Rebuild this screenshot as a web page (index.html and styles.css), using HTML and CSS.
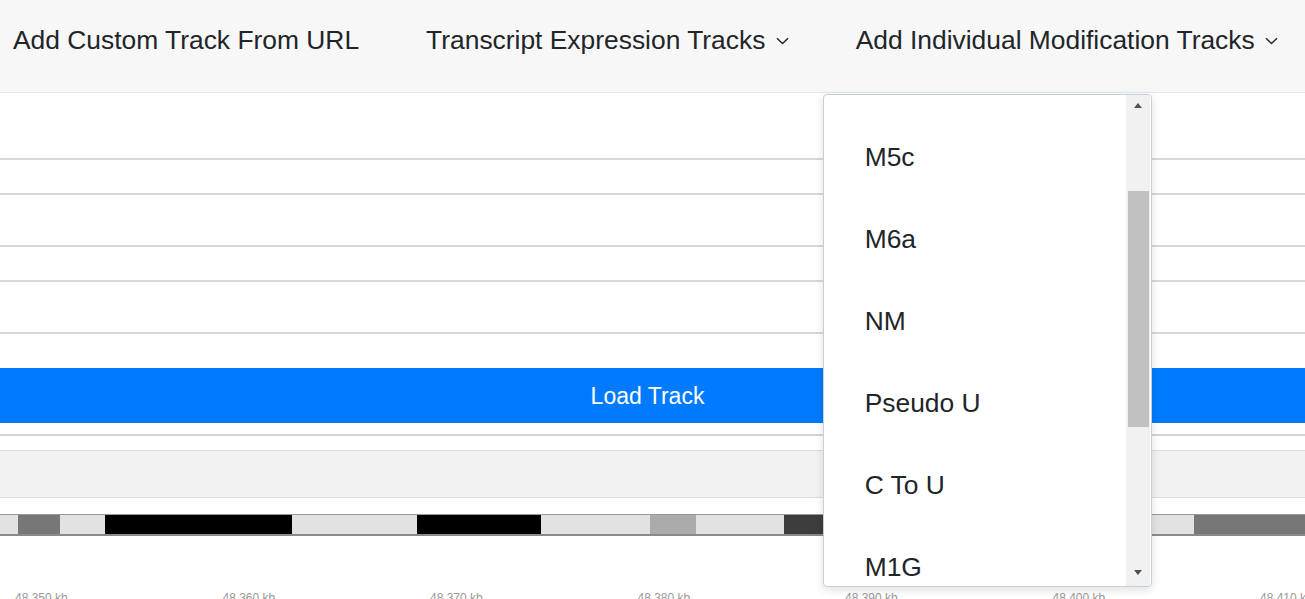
FILE: index.html
```html
<!DOCTYPE html>
<html lang="en">
<head>
    <meta charset="UTF-8">
    <meta name="viewport" content="width=device-width, initial-scale=1.0">
    <title>Genome Browser - Tracks</title>
    <link rel="stylesheet" href="styles.css">
</head>
<body>
    <!-- Top menu with the track options -->
    <header class="navbar">
        <a class="nav-link" href="#">Add Custom Track From URL</a>
        <div class="nav-dropdown">
            <a class="nav-link" href="#">Transcript Expression Tracks
                <svg class="caret" width="13" height="8" viewBox="0 0 13 8"><path d="M1 1.2l5.5 5.3 5.5-5.3" fill="none" stroke="#212529" stroke-width="1.4"/></svg>
            </a>
        </div>
        <div class="nav-dropdown">
            <a class="nav-link" href="#">Add Individual Modification Tracks
                <svg class="caret" width="13" height="8" viewBox="0 0 13 8"><path d="M1 1.2l5.5 5.3 5.5-5.3" fill="none" stroke="#212529" stroke-width="1.4"/></svg>
            </a>

            <!-- open menu, scrolled down by one item -->
            <div class="dropdown-menu">
                <ul class="menu-list">
                    <li><a class="dropdown-item" href="#">M5c</a></li>
                    <li><a class="dropdown-item" href="#">M6a</a></li>
                    <li><a class="dropdown-item" href="#">NM</a></li>
                    <li><a class="dropdown-item" href="#">Pseudo U</a></li>
                    <li><a class="dropdown-item" href="#">C To U</a></li>
                    <li><a class="dropdown-item" href="#">M1G</a></li>
                    <li><a class="dropdown-item" href="#">A To I</a></li>
                </ul>
                <div class="scrollbar">
                    <span class="arrow-up"></span>
                    <span class="thumb"></span>
                    <span class="arrow-down"></span>
                </div>
            </div>
        </div>
    </header>

    <!-- Custom track form -->
    <div class="track-form">
        <div class="field field-tall"></div>
        <div class="field field-short"></div>
        <div class="field field-mid"></div>
        <div class="field field-short"></div>
        <div class="field field-mid"></div>
        <button class="btn-load">Load Track</button>
        <hr class="divider">
    </div>

    <!-- Browser area -->
    <div class="browser-toolbar"></div>

    <div class="ideogram">
        <span class="band gneg" style="width: 18px"></span>
        <span class="band gpos50" style="width: 42px"></span>
        <span class="band gneg" style="width: 45px"></span>
        <span class="band gpos100" style="width: 187px"></span>
        <span class="band gneg" style="width: 125px"></span>
        <span class="band gpos100" style="width: 124px"></span>
        <span class="band gneg" style="width: 109px"></span>
        <span class="band gpos25" style="width: 46px"></span>
        <span class="band gneg" style="width: 88px"></span>
        <span class="band gpos75" style="width: 116px"></span>
        <span class="band gneg" style="width: 294px"></span>
        <span class="band gpos50" style="width: 111px"></span>
    </div>

    <div class="ruler">
        <span>48,350 kb</span>
        <span>48,360 kb</span>
        <span>48,370 kb</span>
        <span>48,380 kb</span>
        <span>48,390 kb</span>
        <span>48,400 kb</span>
        <span>48,410 kb</span>
    </div>
</body>
</html>
```

FILE: styles.css
```css
/* Global */
body {
    margin: 0;
    font-family: "Liberation Sans", Arial, Helvetica, sans-serif;
    color: #212529;
    background: #fff;
    overflow: hidden;
}

a {
    color: inherit;
    text-decoration: none;
}

/* Top navbar */
.navbar {
    display: flex;
    height: 92px;
    padding-left: 13px;
    gap: 67px;
    background: #f7f7f7;
    border-bottom: 1px solid #e6e6e6;
}

.nav-link {
    display: block;
    padding-top: 25px;
    font-size: 26.4px;
    line-height: 30px;
    white-space: nowrap;
}

.nav-dropdown {
    position: relative;
}

.caret {
    margin-left: 3px;
    vertical-align: 4px;
}

/* Open dropdown */
.dropdown-menu {
    position: absolute;
    top: 94px;
    left: -33px;
    z-index: 10;
    width: 327px;
    height: 491px;
    overflow: hidden;
    background: #fff;
    border: 1px solid #c6cfdb;
    border-radius: 4px;
    box-shadow: 0 3px 10px rgba(0, 0, 0, 0.12);
}

.menu-list {
    list-style: none;
    margin: 0;
    padding: 20px 0 0 0;
}

.dropdown-item {
    display: block;
    padding: 27px 0 25px 41px;
    font-size: 26.4px;
    line-height: 30px;
}

/* fake windows scrollbar */
.scrollbar {
    position: absolute;
    top: 0;
    right: 1px;
    width: 24px;
    height: 100%;
    background: #f1f1f1;
}

.thumb {
    position: absolute;
    top: 96px;
    left: 2px;
    width: 21px;
    height: 236px;
    background: #c1c1c1;
}

.arrow-up,
.arrow-down {
    position: absolute;
    left: 8px;
    width: 0;
    height: 0;
    border-left: 4.5px solid transparent;
    border-right: 4.5px solid transparent;
}

.arrow-up {
    top: 8px;
    border-bottom: 5px solid #505050;
}

.arrow-down {
    bottom: 11px;
    border-top: 5px solid #505050;
}

/* Form rows */
.field {
    border-bottom: 2px solid #d7d7dc;
}

.field-tall {
    height: 65px;
}

.field-short {
    height: 33px;
}

.field-mid {
    height: 50px;
}

.btn-load {
    display: block;
    width: 100%;
    height: 55px;
    margin-top: 34px;
    padding: 2px 10px 0 0;
    border: none;
    background: #007bff;
    color: #fff;
    font-family: inherit;
    font-size: 23px;
    cursor: pointer;
}

.divider {
    margin: 11px 0 0 0;
    border: none;
    border-top: 2px solid #d4d4d4;
}

/* Browser toolbar (empty) */
.browser-toolbar {
    height: 46px;
    margin-top: 14px;
    background: #f2f2f2;
    border-top: 1px solid #dcdcdc;
    border-bottom: 1px solid #dcdcdc;
}

/* Chromosome ideogram */
.ideogram {
    display: flex;
    height: 19px;
    margin-top: 16px;
    border-top: 1px solid #999;
    border-bottom: 2px solid #8a8a8a;
}

.band {
    flex: none;
    height: 100%;
}

.gneg { background: #e2e2e2; }
.gpos25 { background: #ababab; }
.gpos50 { background: #777; }
.gpos75 { background: #3d3d3d; }
.gpos100 { background: #000; }

/* Ruler labels, only the top shows */
.ruler {
    display: flex;
    padding-left: 15px;
    margin-top: 55px;
    overflow: hidden;
}

.ruler span {
    width: 207.5px;
    flex: none;
    font-size: 12px;
    color: #999;
}

.ruler span:last-child {
    width: auto;
}
```
